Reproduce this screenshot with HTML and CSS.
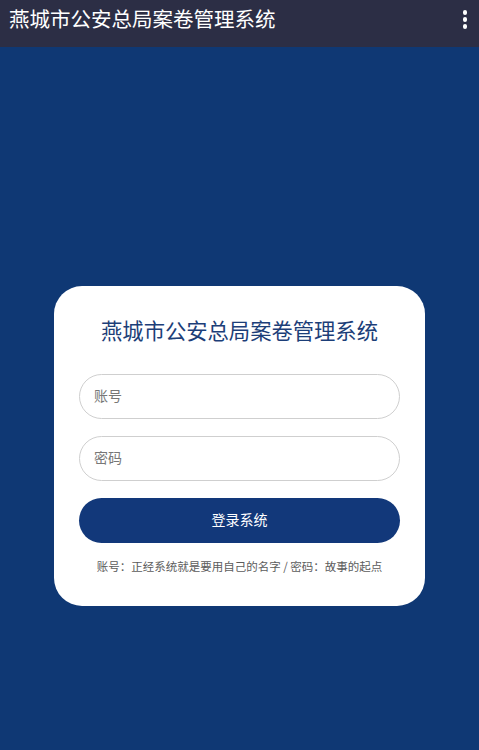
FILE: index.html
```html
<!DOCTYPE html>
<html lang="zh">
<head>
<meta charset="utf-8">
<title>燕城市公安总局案卷管理系统</title>
<link rel="stylesheet" href="styles.css">
</head>
<body>
<header class="appbar">
  <span class="appbar-title">燕城市公安总局案卷管理系统</span>
  <span class="menu"><i></i><i></i><i></i></span>
</header>
<main class="stage">
  <section class="card">
    <h1 class="card-title">燕城市公安总局案卷管理系统</h1>
    <input class="field" type="text" placeholder="账号">
    <input class="field" type="password" placeholder="密码">
    <button class="btn" type="button">登录系统</button>
    <p class="hint">账号：正经系统就是要用自己的名字 / 密码：故事的起点</p>
  </section>
</main>
</body>
</html>
```
FILE: styles.css
```css
* { box-sizing: border-box; }
html, body { margin: 0; padding: 0; height: 100%; }
body {
  font-family: "Noto Sans CJK SC", "Noto Sans", sans-serif;
  background: #0f3874;
  display: flex;
  flex-direction: column;
}
.appbar {
  height: 47px;
  background: #2c2e45;
  display: flex;
  align-items: flex-start;
  justify-content: space-between;
  padding: 0 12px 0 9px;
  flex: none;
}
.appbar-title {
  color: #fff;
  font-size: 20.5px;
  line-height: 36px;
}
.menu {
  display: flex;
  flex-direction: column;
  gap: 2.5px;
  padding-top: 10px;
}
.menu i {
  display: block;
  width: 4.5px;
  height: 4.5px;
  border-radius: 50%;
  background: #fff;
}
.stage {
  flex: 1;
  display: flex;
  align-items: flex-start;
  justify-content: center;
  padding-top: 239px;
}
.card {
  width: 371px;
  height: 320px;
  background: #fff;
  border-radius: 28px;
  padding: 28px 25px 0;
  display: flex;
  flex-direction: column;
}
.card-title {
  margin: 0 0 28px;
  text-align: center;
  font-weight: 400;
  font-size: 21.3px;
  line-height: 32px;
  color: #1c3e78;
}
.field {
  height: 45px;
  border: 1px solid #cfcfcf;
  border-radius: 23px;
  padding: 0 14px 3px;
  font-family: inherit;
  font-size: 14px;
  color: #333;
  margin-bottom: 17px;
  outline: none;
  background: #fff;
}
.field::placeholder { color: #777; }
.btn {
  height: 45px;
  border: none;
  border-radius: 23px;
  background: #12387a;
  color: #fff;
  font-family: inherit;
  font-size: 14px;
  padding: 0 0 3px;
}
.hint {
  margin: 14px 0 0;
  text-align: center;
  font-size: 11.5px;
  line-height: 18px;
  color: #5c5c5c;
}
```
